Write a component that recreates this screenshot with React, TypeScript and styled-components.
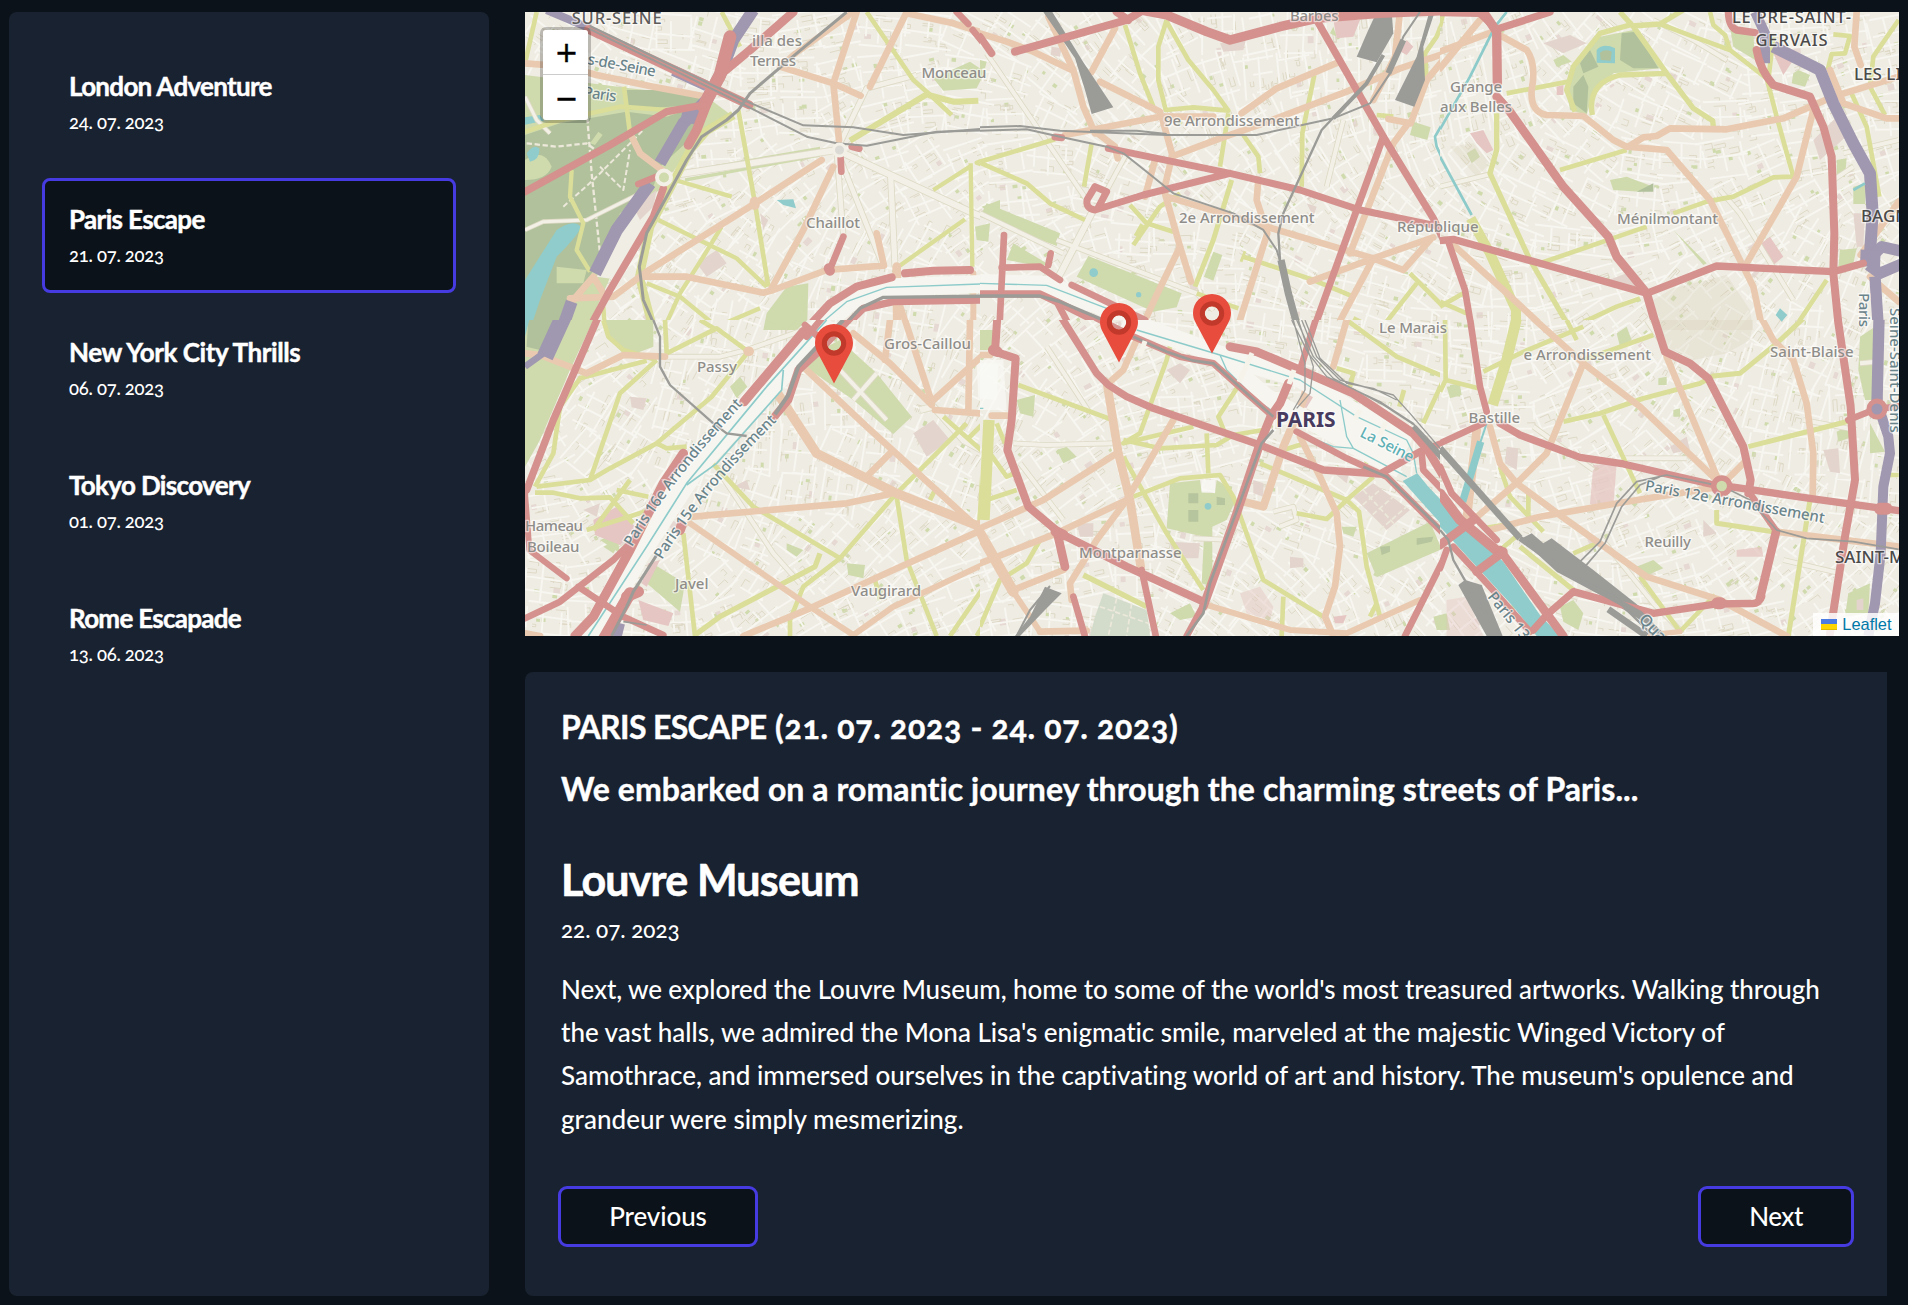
import React from "react";
import styled, { createGlobalStyle } from "styled-components";

const color = {
  page: "#0b1219",
  panel: "#192230",
  accent: "#463be0",
  text: "#ffffff",
};

const GlobalStyle = createGlobalStyle`
  *, *::before, *::after { box-sizing: border-box; }
  html, body { margin: 0; padding: 0; background: ${color.page}; }
  body {
    color: ${color.text};
    font-family: Lato, "Open Sans", sans-serif;
    font-feature-settings: "onum";
    font-variant-ligatures: none;
    overflow: hidden;
  }
  h1, h2, h3, p { margin: 0; }
`;

const Page = styled.div`
  display: grid;
  grid-template-columns: 480px 1374px;
  column-gap: 36px;
  height: 1305px;
  padding: 12px 9px 9px;
`;

const Sidebar = styled.nav`
  display: flex;
  flex-direction: column;
  gap: 18px;
  padding: 33px;
  border-radius: 8px;
  background: ${color.panel};
`;

const TripCard = styled.button<{ $active: boolean }>`
  display: flex;
  flex-direction: column;
  align-items: flex-start;
  height: 115px;
  padding: 21px 24px;
  border: 3px solid ${(p) => (p.$active ? color.accent : "transparent")};
  border-radius: 8px;
  background: ${(p) => (p.$active ? color.page : "transparent")};
  color: inherit;
  font: inherit;
  font-feature-settings: inherit;
  text-align: left;
`;

const TripName = styled.span<{ $track: number }>`
  font-size: 26px;
  font-weight: 700;
  line-height: 34px;
  letter-spacing: ${(p) => p.$track}px;
  -webkit-text-stroke: 0.45px currentColor;
`;

const TripDate = styled.span`
  margin-top: 4px;
  font-size: 18.5px;
  font-weight: 500;
  line-height: 30px;
  letter-spacing: -0.27px;
`;

const Main = styled.main`
  display: flex;
  flex-direction: column;
  gap: 36px;
`;

const MapFrame = styled.section`
  position: relative;
  height: 624px;
  overflow: hidden;
  background: #efece3;
`;

const MapCanvas = styled.svg`
  display: block;
  width: 1374px;
  height: 624px;
  font-feature-settings: normal;
`;

const ZoomControl = styled.div`
  position: absolute;
  top: 15px;
  left: 15px;
  display: flex;
  flex-direction: column;
  border: 3px solid rgba(0, 0, 0, 0.22);
  border-radius: 6px;
  background-clip: padding-box;
`;

const ZoomButton = styled.button<{ $last?: boolean }>`
  display: flex;
  align-items: center;
  justify-content: center;
  width: 45px;
  height: 45px;
  padding: ${(p) => (p.$last ? "2px 0 0 2px" : "0 0 0 2px")};
  border: 0;
  border-bottom: ${(p) => (p.$last ? "0" : "1px solid #ccc")};
  border-radius: ${(p) => (p.$last ? "0 0 3px 3px" : "3px 3px 0 0")};
  background: #fff;
  color: #000;
  font: 400 28px/43px "DejaVu Sans", sans-serif;
  -webkit-text-stroke: 0.5px #000;
`;

const Pin = styled.svg<{ $x: number; $y: number }>`
  position: absolute;
  left: ${(p) => p.$x}px;
  top: ${(p) => p.$y}px;
  width: 38px;
  height: 60px;
`;

const Attribution = styled.div`
  position: absolute;
  right: 0;
  bottom: 0;
  display: flex;
  align-items: center;
  gap: 5.5px;
  height: 23px;
  padding: 0 7.5px 0 8px;
  background: rgba(255, 255, 255, 0.84);
  color: #0078a8;
  font: 400 16.4px/23px "Liberation Sans", Arial, sans-serif;
`;

const Flag = styled.span`
  width: 16px;
  height: 11px;
  background: linear-gradient(#4c7be1 0 45%, #ffd500 45% 92%, #e0bc00 92%);
`;

const Detail = styled.section`
  display: flex;
  flex-direction: column;
  width: 1362px;
  height: 624px;
  padding: 35px 36px 36px;
  border-radius: 8px 0 0 8px;
  background: ${color.panel};
`;

const TripTitle = styled.h2<{ $track: number; $gap: number }>`
  margin-top: ${(p) => p.$gap}px;
  font-size: 32px;
  font-weight: 700;
  line-height: 40px;
  letter-spacing: ${(p) => p.$track}px;
  white-space: nowrap;
  -webkit-text-stroke: 0.4px currentColor;
`;

const TitleName = styled.span`
  letter-spacing: -0.65px;
`;

const PlaceName = styled.h1`
  margin-top: 44px;
  font-size: 43px;
  font-weight: 700;
  line-height: 54px;
  letter-spacing: -0.82px;
  -webkit-text-stroke: 0.6px currentColor;
`;

const PlaceDate = styled.p`
  margin-top: 8px;
  font-size: 22.5px;
  font-weight: 500;
  line-height: 30px;
  letter-spacing: -0.05px;
`;

const Story = styled.p`
  margin-top: 23px;
  font-size: 26px;
  font-weight: 500;
  line-height: 43.2px;
`;

const StoryLine = styled.span<{ $track: number }>`
  display: block;
  white-space: nowrap;
  letter-spacing: ${(p) => p.$track}px;
`;

const Pager = styled.div`
  display: flex;
  justify-content: space-between;
  margin: auto -3px 13px;
`;

const PagerButton = styled.button<{ $width: number; $track: number }>`
  width: ${(p) => p.$width}px;
  height: 61px;
  padding: 0 0 2px;
  border: 3px solid ${color.accent};
  border-radius: 9px;
  background: ${color.page};
  color: inherit;
  font: 500 26px/1 Lato, sans-serif;
  letter-spacing: ${(p) => p.$track}px;
`;

/* ---------- map drawing ---------- */

type LineKey = "yellow" | "orange" | "purple" | "red" | "rail" | "teal" | "river" | "boulevard" | "path";
type Stroke = [width: number, d: string];
type Area = [fill: string, d: string];
type Tile = { x: number; y: number; areas: Area[]; tops?: Area[]; lines: Partial<Record<LineKey, Stroke[]>> };

const lineColor: Record<LineKey, string> = {
  path: "#ece8da",
  boulevard: "#f3f0e7",
  yellow: "#dade99",
  orange: "#e9cab0",
  purple: "#a097b0",
  river: "#f6f5ef",
  red: "#d4918d",
  teal: "#8ccbca",
  rail: "#9b9b98",
};
const order: LineKey[] = ["path", "boulevard", "yellow", "orange", "purple", "river", "teal", "red", "rail"];

const FOREST = "#b1c19c";
const PARK = "#cfdaad";
const WATER = "#8fcccb";
const PINK = "#e5c6c2";
const RAILYARD = "#9b9b98";

/* Each tile is drawn at three times its size on the page. */
const tiles: Tile[] = [
  {
    x: 520, y: 0,
    areas: [
      [PARK, "M15 225 L330 265 L560 290 L640 350 L540 400 L330 700 L200 990 L15 990Z"],
      [FOREST, "M15 405 L120 370 L320 335 L440 350 L500 330 L540 390 L420 500 L400 560 L300 640 L215 820 L120 990 L15 990Z"],
      [FOREST, "M310 270 L420 270 L545 292 L520 315 L430 322 L330 330Z"],
      ["#f0ede4", "M430 560 L330 640 L230 830 L300 840 L380 700Z"],
      [PARK, "M15 480 Q70 440 95 500 Q80 540 15 540Z"],
      [PARK, "M210 430 L235 395 L248 405 L225 435Z M110 800 L200 810 L190 850 L110 850Z"],
      [WATER, "M15 840 L110 690 Q160 655 182 680 Q180 700 110 770 L60 900 L30 990 L15 990Z M15 352 L60 345 L72 362 L15 374Z M20 460 Q40 430 58 445 Q60 480 30 485Z M770 600 L820 598 L828 625 L790 615Z"],
      [PARK, "M1240 235 L1350 185 L1395 215 L1370 265 L1270 272Z M740 940 L800 860 L865 850 L862 960 L830 990 L730 990Z M1385 620 L1440 600 L1440 660Z M1365 680 L1410 670 L1405 725 L1370 720Z"],
      ["#e3d5cd", "M530 790 L590 750 L620 790 L560 830Z M340 620 L410 570 L400 620 L360 660Z M720 640 L745 660 L730 690Z"],
      [PARK, "M490 512 L900 440 L900 450 L490 524Z M495 535 L900 462 L900 470 L495 545Z"],
    ],
    lines: {
      path: [[7, "M200 330 L215 520 L240 760"], [6, "M130 620 L220 540 L370 390"], [6, "M240 500 L310 570 L330 450"], [7, "M20 430 L110 440 L200 430 L240 460"]],
      boulevard: [[18, "M430 530 L950 450 L1360 640 L1440 670"], [14, "M950 450 L970 710 M950 450 L1090 800 M950 450 L1040 265 L1190 225"], [16, "M1112 530 L1125 800"], [9, "M15 690 L70 665 L200 660 L380 570 M15 290 L50 360 L90 400"]],
      yellow: [
        [14, "M50 36 L15 190 M15 395 L120 360 L300 320 L440 330 M312 260 L330 400 M605 36 L660 140 M655 330 L705 610 L745 860 M1040 36 L1180 240 L1225 280 L1295 345"],
        [18, "M1225 280 L990 422 M1225 285 L1300 305 L1375 302"],
        [13, "M465 540 L635 590 M155 510 L150 590 L190 670 L170 750 L210 815 M415 660 L650 775 L740 860 M605 680 L550 770 L480 880 L430 990 M380 850 L480 890 L590 980 L720 925 M1135 800 L1335 658 M1352 490 L1357 800 M1350 500 L1240 570 M1440 460 L1370 488 L1440 515 M250 920 L255 990"],
        [26, "M640 345 L560 392 L510 450 L390 680 L358 830 L400 990"],
      ],
      orange: [
        [20, "M15 190 L140 200 L230 225 L400 260 L560 290 M1010 36 L940 250 L957 420 M780 200 L940 250 L1022 287 M1160 36 L1050 260 M1160 40 L1300 70 L1440 115"],
        [18, "M1000 36 L820 165 L780 200"],
        [20, "M905 480 L705 610 L380 815 L280 890 L150 895 M940 500 L850 690 L752 870 M370 830 L500 830 L730 878 L760 870 L920 810 L1090 797 M1070 700 L1092 797 M330 400 L360 460 L432 515 M160 900 L220 830 L250 880"],
        [26, "M1130 800 L1132 990"], [18, "M1360 820 L1360 990 M1140 915 L1165 990"], [30, "M704 605 L704 615"],
      ],
      purple: [[24, "M80 30 L210 85"], [36, "M700 30 L640 120 L605 215 L560 300 L490 370 L420 490"], [38, "M390 550 L340 620 L290 690 L225 820"], [36, "M155 905 L125 990"], [32, "M460 212 L560 258"], [60, "M520 325 L510 370"]],
      river: [[54, "M880 1000 L1000 900 L1120 862 L1440 850"]],
      teal: [[4, "M880 990 L980 905 L1100 862 L1440 850"]],
      red: [
        [26, "M205 88 L560 255 L688 315"], [26, "M820 36 L690 150 L600 225"], [38, "M630 110 L600 225 L550 320"], [28, "M565 300 L530 390 L505 435"],
        [22, "M550 315 L440 335 L270 435 L15 575 M430 565 L400 650 L270 870 L205 990"], [20, "M355 552 L410 530 M1310 36 L1345 72 M1358 90 L1415 160 M962 475 L964 515 M995 440 L1018 446"],
        [20, "M970 710 L928 812"], [30, "M926 805 L930 812"], [24, "M870 975 L930 910 L1010 860 L1115 832 M1155 820 L1240 812 L1350 810"], [22, "M965 990 L1030 925 L1120 905 L1380 900"], [22, "M1432 890 L1430 990"],
      ],
      rail: [
        [6, "M205 85 L660 308 L860 410 L950 430 L1040 437 L1250 395 L1440 390"], [6, "M210 78 L670 300 L850 376 L1000 382 L1150 405 L1440 382"],
        [9, "M980 36 L830 160 L690 280 L655 330 L620 360 L545 410 L500 480 L380 700 L358 800 L370 900 L410 990"], [10, "M960 990 L1020 925 L1090 892 L1440 888"],
      ],
    },
  },
  {
    x: 980, y: 0,
    areas: [
      [PARK, "M325 768 L605 880 L590 922 L520 935 L290 830Z M20 610 L240 700 L230 738 L0 650Z M700 755 L727 765 L700 842 L672 830Z M100 730 L200 790 L190 800 L80 780Z M1300 365 L1352 382 L1342 420 L1290 405Z M0 180 L20 185 L15 205 L0 208Z M1060 80 L1050 100 L1070 110Z"],
      [PINK, "M1060 60 L1140 60 L1120 110 L1070 115Z M1280 120 L1300 140 L1280 165 L1262 155Z"],
      ["#e3d5cd", "M720 130 L800 110 L790 150 L730 155Z M215 140 L245 145 L240 170 L212 165Z M980 610 L1010 620 L1000 650Z"],
      [WATER, "M328 818 a13 13 0 1 0 26 0 a13 13 0 1 0 -26 0 M468 884 a8 8 0 1 0 16 0 a8 8 0 1 0 -16 0"],
    ],
    tops: [
      [RAILYARD, "M190 36 L217 36 L312 190 L400 322 L335 342 L315 270 L285 175Z"],
      [RAILYARD, "M1190 36 L1235 36 L1240 100 L1190 187 L1130 170 L1165 90Z"],
      [RAILYARD, "M1348 36 L1364 36 L1330 140 L1335 240 L1303 320 L1245 300 L1310 170Z"],
    ],
    lines: {
      boulevard: [[18, "M340 630 L200 900"], [12, "M20 160 L320 600 M440 460 L370 590 M0 640 L250 760 M230 720 L650 880 L700 930 M1040 560 L1090 360"]],
      yellow: [
        [14, "M0 485 L225 418 M0 488 L140 550 L210 610 L315 660 M335 430 L312 560 M435 75 L480 220 L520 320 M560 60 L535 140 L535 240 L557 330 L640 322 L745 332 L700 270 L625 180 L560 65 M745 340 L720 500 M790 405 L835 470 L840 520 M1003 225 L967 400 L965 560 M450 615 L500 670 L580 695 M600 580 L540 620 L460 735 M790 770 L1000 840 L1120 890 M1400 36 L1370 110 L1335 160 L1340 240 M1290 820 L1400 930 L1440 912 M1310 850 L1220 965 M1190 345 L1240 350 M650 880 L775 925 M1120 955 L1190 990 M1400 930 L1402 990"],
        [15, "M755 540 L700 720 L645 860"], [34, "M785 768 L793 771"], [20, "M490 675 L470 710"],
      ],
      orange: [
        [20, "M0 100 L80 125 L160 155 L280 212 M205 50 L280 210 L310 320 L345 400 M405 85 L335 215 M360 245 L540 335 M255 405 L540 350 L700 350 M340 390 L405 440 L413 475"],
        [20, "M545 350 L577 465 L552 570 L600 740 L633 845 M525 480 L495 590 M575 470 L720 415 L850 370 L1100 275 L1260 205 L1440 145 M785 340 L890 265 L1080 185"],
        [20, "M1260 36 L1245 170 L1180 300 M1440 120 L1340 240 L1292 370 L1225 357 M1285 370 L1240 430 L1110 760 M835 540 L830 600 L862 700 L780 960 M560 590 L860 680 L1180 775 L1270 810 L1350 720 M1360 712 L1180 775 L990 845 M1180 775 L1060 1000 M600 740 L530 885 L500 950"],
      ],
      river: [[56, "M0 850 L200 855 L380 925 L520 1000"]],
      teal: [[4, "M0 850 L200 856 L380 925 L520 990"], [8, "M1440 280 L1365 410 L1370 440 L1440 590"]],
      red: [
        [24, "M105 155 L440 60 L480 36 M410 36 L445 60"], [28, "M480 30 L560 45 L680 95 L750 120 L900 80 L1010 55 L1200 40 L1440 30"], [22, "M1010 60 L1210 410 L1360 655 L1400 740 L1450 850 M0 110 L35 160"],
        [21, "M385 445 L750 520 L960 570 L1140 630 L1380 680 M750 520 L490 585 L345 630 Q315 625 322 598 L345 560 L380 575 L355 622 M1210 410 L1130 630 L1000 990 M225 411 L245 413"],
        [20, "M72 705 L58 990 M65 803 L180 800 L240 840 M212 760 L205 795 M275 855 L495 960 M230 905 L275 990 M1400 735 L1440 720"], [22, "M0 882 L180 882 L240 910 L370 975"],
      ],
      rail: [
        [6, "M0 382 L120 378 L240 392 L560 405 L830 405 L1060 355 L1170 310 L1230 220 L1270 110 L1320 36 M0 392 L140 388 L240 410 L380 440 L430 460 L500 515 L580 580 L760 640 L850 690 L890 750 L930 880 L965 1000 M330 392 L470 392 L560 402"],
        [12, "M1210 165 L1160 250 L1060 355"], [7, "M1110 300 L1025 390 L910 640 L895 700 L900 780 L950 990"], [22, "M903 780 L925 880 L958 1000"], [18, "M1270 120 L1225 220"], [10, "M0 888 L180 888 L240 905 L370 960"],
      ],
    },
  },
  {
    x: 1440, y: 0,
    areas: [
      [PARK, "M400 190 L480 110 L580 90 L660 205 L520 220 L455 290 L440 345 L390 330 L380 270Z M870 80 L940 100 L945 180 L880 140Z M1240 560 L1280 550 L1275 612 L1240 612Z M1200 750 L1250 745 L1240 790 L1195 800Z M340 180 L370 165 L395 185 L350 200Z M1060 220 L1075 210 L1110 225 L1095 260 L1055 250Z M80 460 L105 445 L120 470 L95 490Z M1190 480 L1220 475 L1215 530 L1190 530Z M510 540 L560 530 L640 560 L600 575 L520 570Z M700 690 L800 790 L790 795Z"],
      [FOREST, "M545 100 L590 95 L655 205 L580 205 L540 180Z M400 260 L430 225 L445 260 L440 340 L400 310Z M590 575 L640 550 L640 575Z M450 150 L475 200 L430 220 L420 190Z"],
      [WATER, "M470 150 Q490 128 525 145 L525 190 L470 188Z M1020 925 L1042 945 L1025 965 L1007 945Z"],
      [FOREST, "M480 158 Q495 145 515 155 L512 182 L482 180Z"],
      [PINK, "M1000 160 L1060 180 L1030 225Z M90 400 L130 390 L160 450 L140 460 L110 430Z M950 740 L990 710 L1030 770 L1000 795Z M350 260 L370 255 L370 285 L350 285Z"],
      ["#e3d5cd", "M310 130 L390 105 L440 130 L370 160Z M1120 420 L1190 350 L1230 400 L1140 480Z M1240 640 L1275 640 L1270 740 L1250 740Z M480 850 L560 820 L590 860Z"],
      ["rgba(216,210,184,0.3)", "M700 865 L860 825 L930 930 L940 990 L640 990 L640 900Z M30 440 L100 430 L150 490 L110 530Z"],
    ],
    lines: {
      boulevard: [[12, "M640 60 L760 120 L860 180 M1210 460 L1376 420 M0 560 L160 520 M840 570 L900 640 L1060 900 M1240 500 L1180 540"]],
      yellow: [
        [14, "M200 280 L385 245 M660 72 L760 110 L870 150 L980 235 L1010 350 L1060 530 L1000 532 L880 590 L800 605 L700 640 M810 36 L820 75 L855 105 L870 150 M1000 110 L985 240 M360 510 L560 450 M300 790 L620 680 M1180 103 L1230 108 L1215 160 L1175 162 L1163 210 M1376 60 L1300 170 L1290 260 L1335 345 M1230 270 L1280 380 L1318 590 M390 985 L530 920 L600 895 M0 920 L70 880 M0 905 L80 940 M1160 840 L1060 990 M10 36 L0 80"],
        [16, "M540 36 L580 80 L680 220 L760 325 L818 362 L820 380 M580 72 L480 100 L400 200 L380 270 L405 335 M680 220 L540 225 Q440 250 457 345 M575 78 L660 72 L730 30 M170 340 L170 450 L150 520 L270 780 L390 985"], [30, "M92 655 L150 760 L228 930 L228 1000"],
      ],
      orange: [
        [20, "M0 155 L160 95 L260 150 Q290 190 275 270 Q270 335 320 345 L430 348 L520 420 L560 440 L680 450 L810 600 L910 800 L940 860 L970 1000 M120 60 L0 205 M565 440 L610 412 L650 408 L690 385 L860 388 L1030 355 L1180 290 L1376 230 M1120 330 L1070 530 L920 790 M1250 36 L1243 140 L1262 195 M1170 210 L1210 310 L1340 355 L1376 355 M40 735 L190 870 L330 1000 M1376 605 L1262 765 M1290 830 L1376 905"],
      ],
      purple: [[30, "M945 36 L975 100 L975 190"], [36, "M1000 140 L1140 210 L1180 310 L1240 430 L1290 520 L1298 640 L1290 760"], [34, "M1285 780 L1325 740 L1390 755 M1285 795 L1320 820 L1390 790 M1305 830 L1316 1000"], [60, "M1292 750 L1290 800"]],
      teal: [[8, "M200 36 L165 80 L90 230 L0 388 M0 470 L95 645 M1240 570 L1275 550"]],
      red: [
        [22, "M0 38 L120 40 L170 88 L330 36 M0 722 L40 718 L300 790 L620 880 L830 798 L1180 815 L1270 790 M865 30 Q865 80 890 90 L945 98"],
        [28, "M130 36 L170 95 L172 250"], [26, "M170 290 L210 335 L370 560 L505 710 L530 770 L620 880 L655 1000"], [20, "M25 725 L75 870 L97 1000"],
        [24, "M950 150 Q960 210 1000 255 L1110 290 L1150 380 L1175 470 L1183 700 L1180 820 L1198 1000"],
      ],
    },
  },
  {
    x: 520, y: 320,
    areas: [
      [PARK, "M15 0 L220 0 L150 150 L60 360 L15 440Z M960 60 L1070 160 L1175 290 L1120 342 L1000 240 L840 130 L900 90Z M405 735 L495 790 L480 875 L380 790Z M630 200 L660 170 L682 200 L650 235Z M250 0 L400 0 L400 80 L320 110 L270 60Z M740 0 L830 0 L800 30Z M250 680 L310 650 L280 700Z M980 730 L1035 735 L1030 775 L985 765Z M800 670 L850 690 L830 710 L800 690Z M240 660 L290 640 L300 700Z"],
      [FOREST, "M25 0 L120 0 L60 90 L20 80Z"],
      [WATER, "M15 0 L28 0 L15 50Z"],
      [PINK, "M220 600 L290 560 L345 620 L300 675 L225 645Z M355 840 L460 880 L445 918 L370 900Z M385 730 L420 720 L380 800 L365 790Z"],
      ["#e3d5cd", "M330 230 L380 235 L370 270 L335 262Z M1180 340 L1240 300 L1290 360 L1220 410Z M190 570 L240 550 L230 590Z M640 500 L680 480 L690 510Z"],
      ["rgba(250,249,245,0.7)", "M1370 130 L1435 130 L1430 240 L1375 235Z"],
    ],
    lines: {
      boulevard: [[12, "M440 110 L600 110 L680 90 L850 30 M960 150 L1100 300 M1000 240 L1070 160 M600 460 L760 700 L840 790"], [18, "M1200 270 L1240 260 L1330 360 L1440 420"]],
      yellow: [
        [14, "M250 0 L265 50 L310 90 L410 120 M435 0 L440 100 L590 25 L685 95 L575 230 L410 370 L270 445 L210 480 L50 500 M410 120 L300 220 L210 480 M380 122 L180 175 L120 260 L100 400 L45 500 M45 518 L100 518 L180 535 L270 532 L340 610 M290 510 L385 530 M410 370 L440 385 L500 380 M390 570 L200 630 M330 480 L220 630 M590 30 L540 0 M550 400 L700 560 L960 715 L850 800 L810 900 L810 948 M960 715 L1120 530 L1340 310 M490 640 L525 948 M1130 530 L1160 720 L1250 948 M1270 290 L1440 440 M1420 760 L1290 948 M1440 830 L1370 948 M1230 540 L1250 500 M1065 780 L1080 840 M1340 360 L1400 300"],
        [16, "M900 700 L885 740 L600 890 L525 945"], [34, "M1408 300 L1388 610"],
      ],
      orange: [
        [20, "M15 100 L60 105 L200 160 L310 105 L435 110 M860 150 L1040 320 L1370 620 M1000 40 L1110 130 L1235 255 M1110 0 L1095 120 M1155 0 L1235 245 L1395 100 M1245 270 L1440 285 M1110 400 L1040 470 M520 590 L980 550 L1110 522 M1350 0 L1345 275 M430 560 L465 580 M15 940 L60 948"],
        [28, "M740 170 L890 400 L1130 520 L1380 620"], [40, "M1380 620 L1450 770"], [18, "M510 610 L870 860 L1000 945 L1120 860 L1440 710"], [20, "M670 948 L870 865 L1120 750 L1440 605"], [28, "M684 94 L688 94"],
      ],
      purple: [[50, "M130 -10 L75 110"], [20, "M15 140 L70 100"], [30, "M300 910 L290 950"]],
      river: [[78, "M930 0 L760 180 L520 440 L350 700 L210 960"]],
      teal: [[5, "M920 0 L740 200 L500 490 L380 680 L205 948 M790 150 L785 210 L590 430 L500 495"]],
      red: [
        [22, "M235 -10 L100 300 L20 510 M995 -10 L900 90"], [18, "M15 520 L28 690 L140 775"], [28, "M850 35 L740 165 L672 245"], [20, "M910 -10 L860 50 M855 15 L900 55"], [24, "M895 95 L835 150 L805 240 L765 288"],
        [28, "M490 400 L430 490 L330 690 L220 890 L165 948"], [20, "M15 895 L120 845 L280 720 L330 670 M175 800 L310 890 L430 945"], [34, "M320 830 L355 815"], [36, "M330 820 L290 890 L250 960"], [30, "M485 615 L480 630"], [24, "M1432 -10 L1428 95"], [36, "M1425 90 L1440 95"],
      ],
      rail: [[7, "M400 0 L420 50 L420 140 L450 195 L580 310 L620 340 L680 348"], [12, "M970 0 L900 70 L835 140 L805 225 L765 283"], [9, "M410 705 L340 815 L320 860 L275 948"], [5, "M310 905 L380 915"]],
    },
  },
  {
    x: 980, y: 320,
    areas: [
      [PARK, "M570 490 L660 480 L665 515 L705 520 L710 480 L745 500 L765 545 L740 600 L697 620 L697 800 L665 790 L672 650 L560 625Z M1160 700 L1350 605 L1385 688 L1190 772Z M110 240 L165 225 L160 290 L120 280Z M230 390 L260 380 L290 410 L250 430Z M570 880 L630 850 L650 890 L600 900Z M1000 340 L1060 330 L1060 365Z M1085 620 L1130 620 L1120 650 L1090 640Z M1360 890 L1400 880 L1410 930 L1370 930Z M0 30 L40 30 L40 90 L0 90Z M1410 195 L1440 190 L1440 230 L1410 225Z"],
      ["#d3dccb", "M370 820 L500 870 L510 948 L330 948 L345 890Z"],
      ["#b6c59d", "M625 520 L655 520 L655 550 L625 550Z M625 570 L655 570 L655 605 L625 605Z M710 530 L735 535 L735 555 L710 555Z M1200 680 L1230 678 L1230 695 L1205 705Z M1310 655 L1360 650 L1355 665 L1310 675Z"],
      [PINK, "M970 220 L1015 225 L1000 270 L965 260Z M1060 890 L1100 885 L1090 910 L1065 910Z"],
      ["rgba(229,198,194,0.45)", "M780 820 L840 800 L880 860 L870 900 L800 880Z"],
      ["#e3d5cd", "M560 150 L600 130 L630 150 L600 190Z M1120 530 L1180 490 L1290 570 L1220 630Z M570 665 L660 670 L655 715 L580 715Z M1050 450 L1110 450 L1100 490Z M290 610 L340 610 L340 650 L300 650Z M820 480 L850 490 L850 530 L820 520Z M930 710 L970 715 L970 740 L930 745Z"],
      ["rgba(250,249,245,0.7)", "M0 120 L70 120 L80 270 L0 270Z M665 480 L705 480 L705 518 L665 518Z"],
    ],
    tops: [
      [WATER, "M1268 483 L1312 460 L1345 500 L1440 600 L1440 665 L1408 640Z"],
      [WATER, "M674 559 a10 10 0 1 0 20 0 a10 10 0 1 0 -20 0"],
      [RAILYARD, "M195 800 L245 820 L200 865 L120 948 L105 948 L150 890Z"],
    ],
    lines: {
      boulevard: [[12, "M100 370 L200 375 L400 370 M120 430 L250 600 M880 575 L940 560 L950 600 L900 620 M1080 560 L1110 590 M200 80 L330 280 M760 660 L640 655"]],
      path: [[5, "M1130 570 L1200 510 M1160 600 L1240 530 M1200 630 L1280 560 M1150 510 L1250 620 M360 860 L505 910 M410 835 L385 948 M455 850 L440 948"]],
      yellow: [
        [14, "M115 195 L390 297 M580 40 L560 120 L480 340 L430 370 L640 320 M430 360 L540 385 L710 375 L760 345 L850 330 M680 340 L685 460 M780 190 L715 290 L735 340 M460 530 L600 475 L720 465 L760 530 L850 780 L1030 890 M430 410 L560 640 L670 810 M840 430 L1100 540 L1180 470 M950 580 L1040 597 L1100 540 L1137 575 L1160 740 L1200 890 M30 400 L80 470 L100 462 M20 540 L110 510 M180 660 L140 730 L60 780 L0 920 M910 830 L905 948 M1100 0 L1250 110 L1440 190 M1400 0 L1395 170 L1330 310 M1070 145 L1120 160 L1110 200 M1272 210 L1258 260 M1220 310 L1158 430 M910 390 L975 370 M50 310 L75 370 M1170 890 L1190 850"],
        [16, "M310 765 L500 860"], [34, "M27 300 L12 600"],
      ],
      orange: [
        [26, "M382 195 L415 400 L450 540 L482 740"], [20, "M470 60 L430 150 L385 190 M0 105 L30 105 M0 625 L190 540 L410 400 M0 730 L230 640 L440 540 L580 300 M440 540 L350 660 L270 790 L275 840 M100 810 L250 750 M1060 140 L1100 0 M35 287 L85 287 M180 935 L320 932"],
        [32, "M0 640 L100 815"], [18, "M100 815 L180 935"], [24, "M990 170 L970 240 L910 380 L850 560 L790 545"], [20, "M960 350 L1020 470 L1070 580 L1080 680 L1065 800 L1035 890 L1060 948"], [18, "M680 855 L930 930 L1100 940 L1320 840"],
      ],
      river: [[56, "M430 0 L720 105 L960 175 L1130 280 L1290 370"], [50, "M720 110 L860 230 L1000 310 L1180 410 L1260 450"], [80, "M1000 230 L1180 340 L1260 410"]],
      teal: [[4, "M470 30 L720 105 L960 180 L1130 290 L1280 360 L1300 400 L1310 460 M720 105 L740 150 L830 240 L880 275 M1080 240 L1100 350 L1120 385 L1060 380 L960 340 M1120 385 L1280 470 M0 265 L10 265"]],
      red: [
        [22, "M243 -10 L350 160 L385 195 L440 230 L520 265 L840 375 L1030 450 L1200 462 L1320 395 L1440 350"], [24, "M52 -10 L45 95 M45 95 L107 115 L95 300 L82 390 L145 560 L240 640 L440 740 L670 845"], [26, "M750 80 L830 95 L960 150 L1120 220 L1300 340 L1340 385 L1410 500 L1440 550"],
        [20, "M1010 -10 L960 150 M350 -5 L460 50 L600 110 L700 130 L800 220 L880 290 M950 335 L1100 415 L1220 470 L1410 660"], [26, "M925 190 L900 250 L872 290 L840 370 L770 580 L670 860"], [20, "M668 860 L620 948"], [26, "M232 640 L255 740"], [20, "M485 750 L530 960 M280 830 L318 960 M1405 690 L1275 948 M1325 400 L1330 450 L1440 565 M1410 670 L1440 645"],
        [32, "M40 90 L52 95 M228 635 L250 645"], [16, "M1395 690 L1440 700"],
      ],
      rail: [
        [4, "M935 0 L985 100 L1040 170 L1200 245 L1300 310 L1440 470 M950 0 L1000 110 L1060 175 L1210 255 L1310 320 L1440 460 M965 0 L1010 110 L1080 180 L1240 225 L1290 280 L1440 455 M975 0 L1020 115 L1100 190 L1180 205 L1250 240 M940 0 L975 130 L975 210 L940 270 M955 0 L1000 140 L990 220 L950 265"],
        [8, "M880 330 L845 370 L690 790 L670 880 L620 948 M460 50 L560 95 L640 122 L700 130 L800 220 L880 290 M1150 440 L1220 470 L1400 645 L1415 740 L1440 800"], [12, "M1300 320 L1440 480"], [6, "M110 948 L150 870 L210 798"],
      ],
    },
  },
  {
    x: 1440, y: 320,
    areas: [
      [PARK, "M1260 50 L1305 20 L1300 240 L1275 240 L1255 150Z M1290 310 L1335 395 L1290 400Z M360 860 L400 840 L430 880 L415 930 L370 905Z M590 740 L640 720 L670 745 L600 775Z M700 270 L720 265 L720 290 L700 290Z M530 40 L560 20 L575 60 L540 80Z M1225 820 L1290 790 L1285 880 L1215 890Z M20 200 L60 195 L65 225 L30 235Z M655 175 L680 170 L680 195 L655 195Z M1190 335 L1240 310 L1240 350 L1195 365Z"],
      ["rgba(229,198,194,0.75)", "M460 435 L530 430 L520 560 L450 552Z M890 690 L965 680 L970 710 L890 710Z"],
      ["rgba(229,198,194,0.4)", "M20 840 L80 830 L130 948 L20 948Z"],
      ["#e3d5cd", "M690 380 L740 350 L750 390 L700 400Z M1160 400 L1190 390 L1180 420Z M200 380 L235 385 L230 450 L195 430Z M1150 390 L1195 385 L1200 460 L1170 455Z M790 600 L830 640 L790 650Z M1250 840 L1270 835 L1270 870 L1250 870Z"],
      ["rgba(216,210,184,0.3)", "M640 0 L940 0 L930 60 L860 100 L760 120 L680 80Z"],
    ],
    tops: [
      [WATER, "M0 545 L190 725 L300 885 L360 948 L290 948 L220 860 L0 620Z"],
      [RAILYARD, "M230 645 L245 655 L275 640 L310 670 L335 655 L460 750 L600 860 L640 925 L490 830 L350 755Z"],
      [RAILYARD, "M55 795 L75 780 L125 795 L188 948 L140 948Z"],
    ],
    lines: {
      boulevard: [[12, "M550 415 L740 415 M280 320 L460 450 M480 650 L640 850 L720 930 M1090 300 L1250 330 M1030 720 L1200 760 M1260 130 L1310 125 M620 0 L700 120"]],
      yellow: [
        [14, "M380 0 L410 60 M130 155 L240 100 L430 20 M15 -10 L17 180 L115 205 M17 180 L0 215 M430 120 L640 45 M490 285 L600 520 M180 440 L210 530 L310 635 M265 520 L265 590 M470 670 L400 700 M130 625 L220 610 M180 690 L240 640 M600 770 L720 935 L825 825 M1376 465 L1330 465"],
        [15, "M370 305 L480 280 L610 235 L780 190 L820 168 L900 160 L1010 70 L1090 -5 M925 380 L1240 300 M1110 540 L1045 948 M830 570 L830 610 L1000 635 M240 680 L400 810"], [32, "M230 -5 L200 120 L158 255"],
      ],
      orange: [
        [20, "M280 -5 L430 130 L600 260 L840 490 M430 130 L320 400 L240 480 L100 600 M680 110 L835 480 M965 -5 L1000 60 L1060 120 L1100 250 L1120 400 L1118 530 M150 320 L180 430 L230 490 L380 600 L620 770 L840 840 L1040 948 M150 630 L300 590 L560 545 L840 500 M1010 635 L1376 680 M860 480 L910 430"], [26, "M110 330 L80 600"], [16, "M630 945 L720 935"],
      ],
      purple: [[34, "M1317 -5 L1311 250"], [30, "M1312 250 L1345 350 L1350 400 L1330 500 L1322 700 L1305 850 L1285 948"]],
      teal: [[6, "M140 310 L120 370"], [22, "M122 365 L68 545"]],
      red: [
        [20, "M90 -5 L120 200 L140 275 M0 370 L130 310 M1225 300 L1300 270 L1376 258 M1180 0"], [22, "M180 310 L240 345 L420 412 L550 432 L810 492 M870 500 L1130 538 L1376 572"], [24, "M643 -5 L675 95 L750 130 L805 175 L910 380 L932 480 L925 520"], [20, "M930 520 L1010 635"], [26, "M1008 635 L960 835"], [22, "M965 830 Q955 855 930 850 L830 852 L640 880 L400 815 L320 885 L280 930"],
        [24, "M1193 -5 L1232 260 L1245 480 L1215 650 L1170 940"], [20, "M0 440 L35 520 L170 660"], [30, "M0 520 L60 600 L180 700"], [26, "M180 690 L370 948"], [26, "M0 675 L100 600 M110 755 L190 695"], [20, "M40 680 L150 800 L270 935 M0 745 L20 690"], [36, "M832 850 L842 850 M1320 566 L1340 566"],
      ],
      rail: [
        [20, "M0 385 L240 655"], [16, "M240 655 L400 770 L600 880 L680 960"], [5, "M420 725 L480 665 L530 550 L590 485 L680 465 L850 500 L930 540 L1010 630 L1100 655 L1240 665 L1376 688 M435 740 L495 670 L545 560 L600 495 L660 470"], [20, "M505 868 L620 948"], [7, "M0 630 L25 660 L40 720 L80 790 L180 948 M400 770 L520 830 L640 948"],
      ],
    },
  },
];

const rings: { cx: number; cy: number; r: number; w: number; c: string; fill: string }[] = [
  { cx: 1721.7, cy: 486, r: 8, w: 5.5, c: "#d4918d", fill: PARK },
  { cx: 1877, cy: 409, r: 8, w: 5, c: "#d4918d", fill: "#a097b0" },
  { cx: 664, cy: 177.5, r: 7, w: 4, c: "#f3f0e7", fill: PARK },
  { cx: 839.5, cy: 150, r: 6, w: 3, c: "#f3f0e7", fill: "#dcdad4" },
];

function seeded(seed: number) {
  let s = seed;
  return () => {
    s = (s + 0x6d2b79f5) | 0;
    let t = Math.imul(s ^ (s >>> 15), 1 | s);
    t = (t + Math.imul(t ^ (t >>> 7), 61 | t)) ^ t;
    return ((t ^ (t >>> 14)) >>> 0) / 4294967296;
  };
}

/* Side streets and building outlines: one small rotated street grid for each cell. */
function buildTexture() {
  const rand = seeded(75);
  let streets = "";
  let houses = "";
  let greens = "";
  let blocks = "";
  for (let gx = 525; gx < 1900; gx += 42) {
    for (let gy = 12; gy < 640; gy += 42) {
      const a = Math.sin(gx / 170) * 0.8 + Math.cos(gy / 120) * 0.7 + (rand() - 0.5) * 0.5;
      const c = Math.cos(a);
      const s = Math.sin(a);
      const at = (u: number, v: number) => `${(gx + 21 + u * c - v * s).toFixed(1)} ${(gy + 21 + u * s + v * c).toFixed(1)}`;
      for (let k = 0; k < 3; k++) {
        const v = -22 + k * 16 + rand() * 7;
        streets += `M${at(-24 + rand() * 8, v)}L${at(16 + rand() * 14, v + rand() * 4)}`;
        const u = -22 + k * 18 + rand() * 8;
        streets += `M${at(u, -18 + rand() * 10)}L${at(u, 4 + rand() * 20)}`;
      }
      for (let k = 0; k < 6; k++) {
        const u = -20 + rand() * 38;
        const v = -20 + rand() * 38;
        const w = 3 + rand() * 9;
        const h = 2 + rand() * 4;
        houses += `M${at(u, v)}L${at(u + w, v)}L${at(u + w, v + h)}`;
        if (rand() > 0.5) houses += `L${at(u, v + h)}`;
      }
      const spot = (size: number) => {
        const u = -18 + rand() * 34;
        const v = -18 + rand() * 34;
        const w = size + rand() * size;
        const h = size + rand() * size * 0.6;
        return `M${at(u, v)}L${at(u + w, v)}L${at(u + w, v + h)}L${at(u, v + h)}Z`;
      };
      for (let k = 0; k < 3; k++) if (rand() > 0.45) greens += spot(2.6);
      if (rand() > 0.5) blocks += spot(4);
    }
  }
  return { streets, houses, greens, blocks };
}
const texture = buildTexture();

type Label = { t: string; x: number; y: number; w?: number; s?: number; c?: string; b?: number; r?: number };
const GREY = "#8f8d89";
const DARK = "#4b4a4a";
const SLATE = "#6a848b";
const labels: Label[] = [
  { t: "SUR-SEINE", x: 571.7, y: 23.5, w: 90, s: 16.5, c: "#5d5c5b", b: 500 },
  { t: "illa des", x: 752, y: 45.6, w: 50 },
  { t: "Ternes", x: 750, y: 66, w: 46 },
  { t: "Monceau", x: 921.5, y: 77.5, w: 65 },
  { t: "s-de-Seine", x: 587, y: 64, w: 69, c: SLATE, r: 10.5 },
  { t: "Paris", x: 583, y: 97, w: 33, c: SLATE, r: 8 },
  { t: "Chaillot", x: 806, y: 228, w: 54 },
  { t: "Barbès", x: 1290, y: 20.7, w: 48.5 },
  { t: "9e Arrondissement", x: 1164, y: 126, w: 135.6 },
  { t: "2e Arrondissement", x: 1179, y: 222.5, w: 135.5 },
  { t: "République", x: 1397, y: 232.3, w: 81.5 },
  { t: "Grange", x: 1450, y: 92, w: 52 },
  { t: "aux Belles", x: 1440, y: 112, w: 72 },
  { t: "Ménilmontant", x: 1617, y: 224, w: 101 },
  { t: "LE PRÉ-SAINT-", x: 1732, y: 22.5, w: 119, s: 16.5, c: DARK, b: 500 },
  { t: "GERVAIS", x: 1755.5, y: 46, w: 72, s: 16.5, c: DARK, b: 500 },
  { t: "LES LILAS", x: 1854, y: 79.5, s: 17, c: DARK, b: 500 },
  { t: "BAGNOLET", x: 1861, y: 222, s: 17, c: DARK, b: 500 },
  { t: "Paris", x: 1859, y: 293, w: 34, c: SLATE, r: 90 },
  { t: "Seine-Saint-Denis", x: 1890, y: 308, c: SLATE, r: 90 },
  { t: "Gros-Caillou", x: 884, y: 348.5, w: 87 },
  { t: "Passy", x: 697, y: 371.5, w: 40 },
  { t: "Hameau", x: 525, y: 531, w: 58 },
  { t: "Boileau", x: 527, y: 551.5, w: 52.5 },
  { t: "Javel", x: 675, y: 589, w: 33.5 },
  { t: "Vaugirard", x: 851, y: 596, w: 70 },
  { t: "PARIS", x: 1276, y: 426.7, w: 59.5, s: 21, c: "#483b60", b: 700 },
  { t: "La Seine", x: 1359, y: 436, w: 58, c: "#5eb0b4", r: 27 },
  { t: "Le Marais", x: 1379, y: 332.5, w: 68 },
  { t: "Montparnasse", x: 1079, y: 557.8, w: 102.5 },
  { t: "e Arrondissement", x: 1523.5, y: 359.5, w: 127.5 },
  { t: "Saint-Blaise", x: 1770, y: 357.3, w: 83.5 },
  { t: "Bastille", x: 1468.5, y: 423, w: 51.5 },
  { t: "Reuilly", x: 1644.5, y: 546.5, w: 46.5 },
  { t: "Paris 12e Arrondissement", x: 1644.5, y: 490.5, w: 182, c: SLATE, r: 10.3 },
  { t: "SAINT-MANDÉ", x: 1835, y: 563, s: 17, c: DARK, b: 500 },
  { t: "Paris 13e Arrondissement", x: 1487, y: 597, c: SLATE, r: 51 },
  { t: "Quai d'Ivry", x: 1638, y: 620, s: 16, c: SLATE, r: 47 },
];

function MapLabel({ t, x, y, w, s = 15, c = GREY, b = 500, r = 0 }: Label) {
  return (
    <text
      transform={`translate(${x} ${y}) rotate(${r})`}
      fontSize={s}
      fontWeight={b}
      fill={c}
      stroke="rgba(255,255,255,0.6)"
      strokeWidth={2.6}
      strokeLinejoin="round"
      paintOrder="stroke"
      textLength={w}
    >
      {t}
    </text>
  );
}

const tileTransform = (t: Tile) => `translate(${t.x} ${t.y}) scale(0.33333)`;
const tileClip = (t: Tile) => `url(#tile-${t.x}-${t.y})`;

function ParisMap() {
  return (
    <MapCanvas viewBox="525 12 1374 624" fontFamily='"Noto Sans", "Open Sans", sans-serif'>
      <defs>
        {tiles.map((t) => (
          <clipPath key={`${t.x}-${t.y}`} id={`tile-${t.x}-${t.y}`}>
            <rect x={0} y={0} width={t.x === 1440 ? 1404 : 1380} height={t.y === 0 ? 960 : 990} />
          </clipPath>
        ))}
        <path id="quay-16" d="M632 547 Q672 480 744 403" />
        <path id="quay-15" d="M662 560 Q704 491 779 419" />
      </defs>
      <rect x={525} y={12} width={1374} height={624} fill="#efece3" />
      <path d={texture.blocks} fill="#e6d8d2" />
      <path d={texture.greens} fill={PARK} />
      <path d={texture.houses} fill="none" stroke="#dcd7c3" strokeWidth={0.9} />
      <path d={texture.streets} fill="none" stroke="#f7f6f0" strokeWidth={1.9} />
      {tiles.map((t, i) => (
        <g key={i} transform={tileTransform(t)}>
          {t.areas.map(([fill, d], k) => (
            <path key={k} d={d} fill={fill} />
          ))}
        </g>
      ))}
      <g fill="none" strokeLinecap="butt" strokeLinejoin="round">
        {order.map((key) => (
          <g key={key} stroke={lineColor[key]} strokeDasharray={key === "path" ? "16 8" : undefined}>
            {tiles.map((t, i) => (
              <g key={i} transform={tileTransform(t)}>
                <g clipPath={tileClip(t)}>
                  {key === "boulevard" &&
                    t.lines.boulevard?.map(([w, d], k) => <path key={`e${k}`} d={d} strokeWidth={w + 5} stroke="#dedac6" />)}
                  {t.lines[key]?.map(([w, d], k) => (
                    <path key={k} d={d} strokeWidth={w} strokeLinecap={key === "red" || key === "orange" ? "round" : "butt"} />
                  ))}
                  {key === "teal" && t.tops?.map(([fill, d], k) => <path key={`t${k}`} d={d} fill={fill} stroke="none" />)}
                </g>
              </g>
            ))}
          </g>
        ))}
      </g>
      {rings.map((r, i) => (
        <circle key={i} cx={r.cx} cy={r.cy} r={r.r} fill={r.fill} stroke={r.c} strokeWidth={r.w} />
      ))}
      <g stroke="#f6f3ea" strokeWidth={5}>
        <path d="M1145 341 L1140 356 M1252 353 L1239 382 M1294 370 L1289 384 M1360 410 L1355 419 M1386 422 L1380 434" />
      </g>
      {labels.map((l) => (
        <MapLabel key={`${l.t}-${l.x}`} {...l} />
      ))}
      <g fontSize={15} fontWeight={500} fill={SLATE} stroke="rgba(255,255,255,0.6)" strokeWidth={2.6} paintOrder="stroke">
        <text textLength={181}>
          <textPath href="#quay-16">Paris 16e Arrondissement</textPath>
        </text>
        <text textLength={181}>
          <textPath href="#quay-15">Paris 15e Arrondissement</textPath>
        </text>
      </g>
    </MapCanvas>
  );
}

function MapPin({ x, y }: { x: number; y: number }) {
  return (
    <Pin $x={x - 19} $y={y - 59} viewBox="0 0 38 60">
      <path
        fillRule="evenodd"
        fill="#e84c3d"
        d="M19 0 C8.5 0 0 8.4 0 19 C0 23 1.2 26.2 2.8 29 L19 59.5 L35.2 29 C36.8 26.2 38 23 38 19 C38 8.4 29.5 0 19 0Z M19 12.2 a7.3 7.3 0 1 1 0 14.6 a7.3 7.3 0 1 1 0 -14.6Z"
      />
      <circle cx={19} cy={19.5} r={9.7} fill="none" stroke="#c1392b" strokeWidth={5} />
    </Pin>
  );
}

const trips = [
  { name: "London Adventure", date: "24. 07. 2023", track: -0.7 },
  { name: "Paris Escape", date: "21. 07. 2023", track: -0.65 },
  { name: "New York City Thrills", date: "06. 07. 2023", track: -0.44 },
  { name: "Tokyo Discovery", date: "01. 07. 2023", track: -0.65 },
  { name: "Rome Escapade", date: "13. 06. 2023", track: -0.72 },
];

const places = [
  { x: 309, y: 371 },
  { x: 594, y: 350 },
  { x: 687, y: 341 },
];

const story = [
  { text: "Next, we explored the Louvre Museum, home to some of the world's most treasured artworks. Walking through", track: -0.1 },
  { text: "the vast halls, we admired the Mona Lisa's enigmatic smile, marveled at the majestic Winged Victory of", track: -0.03 },
  { text: "Samothrace, and immersed ourselves in the captivating world of art and history. The museum's opulence and", track: -0.03 },
  { text: "grandeur were simply mesmerizing.", track: 0.04 },
];

export default function App() {
  return (
    <>
      <GlobalStyle />
      <Page>
        <Sidebar>
          {trips.map((trip) => (
            <TripCard key={trip.name} $active={trip.name === "Paris Escape"}>
              <TripName $track={trip.track}>{trip.name}</TripName>
              <TripDate>{trip.date}</TripDate>
            </TripCard>
          ))}
        </Sidebar>
        <Main>
          <MapFrame>
            <ParisMap />
            {places.map((p) => (
              <MapPin key={p.x} x={p.x} y={p.y} />
            ))}
            <ZoomControl>
              <ZoomButton>+</ZoomButton>
              <ZoomButton $last>−</ZoomButton>
            </ZoomControl>
            <Attribution>
              <Flag />
              <span>Leaflet</span>
            </Attribution>
          </MapFrame>
          <Detail>
            <TripTitle $track={0.7} $gap={0}>
              <TitleName>PARIS ESCAPE</TitleName> (21. 07. 2023 - 24. 07. 2023)
            </TripTitle>
            <TripTitle $track={0.07} $gap={22}>
              We embarked on a romantic journey through the charming streets of Paris...
            </TripTitle>
            <PlaceName>Louvre Museum</PlaceName>
            <PlaceDate>22. 07. 2023</PlaceDate>
            <Story>
              {story.map((line) => (
                <StoryLine key={line.text} $track={line.track}>
                  {line.text}{" "}
                </StoryLine>
              ))}
            </Story>
            <Pager>
              <PagerButton $width={200} $track={-0.1}>Previous</PagerButton>
              <PagerButton $width={156} $track={-0.5}>Next</PagerButton>
            </Pager>
          </Detail>
        </Main>
      </Page>
    </>
  );
}
